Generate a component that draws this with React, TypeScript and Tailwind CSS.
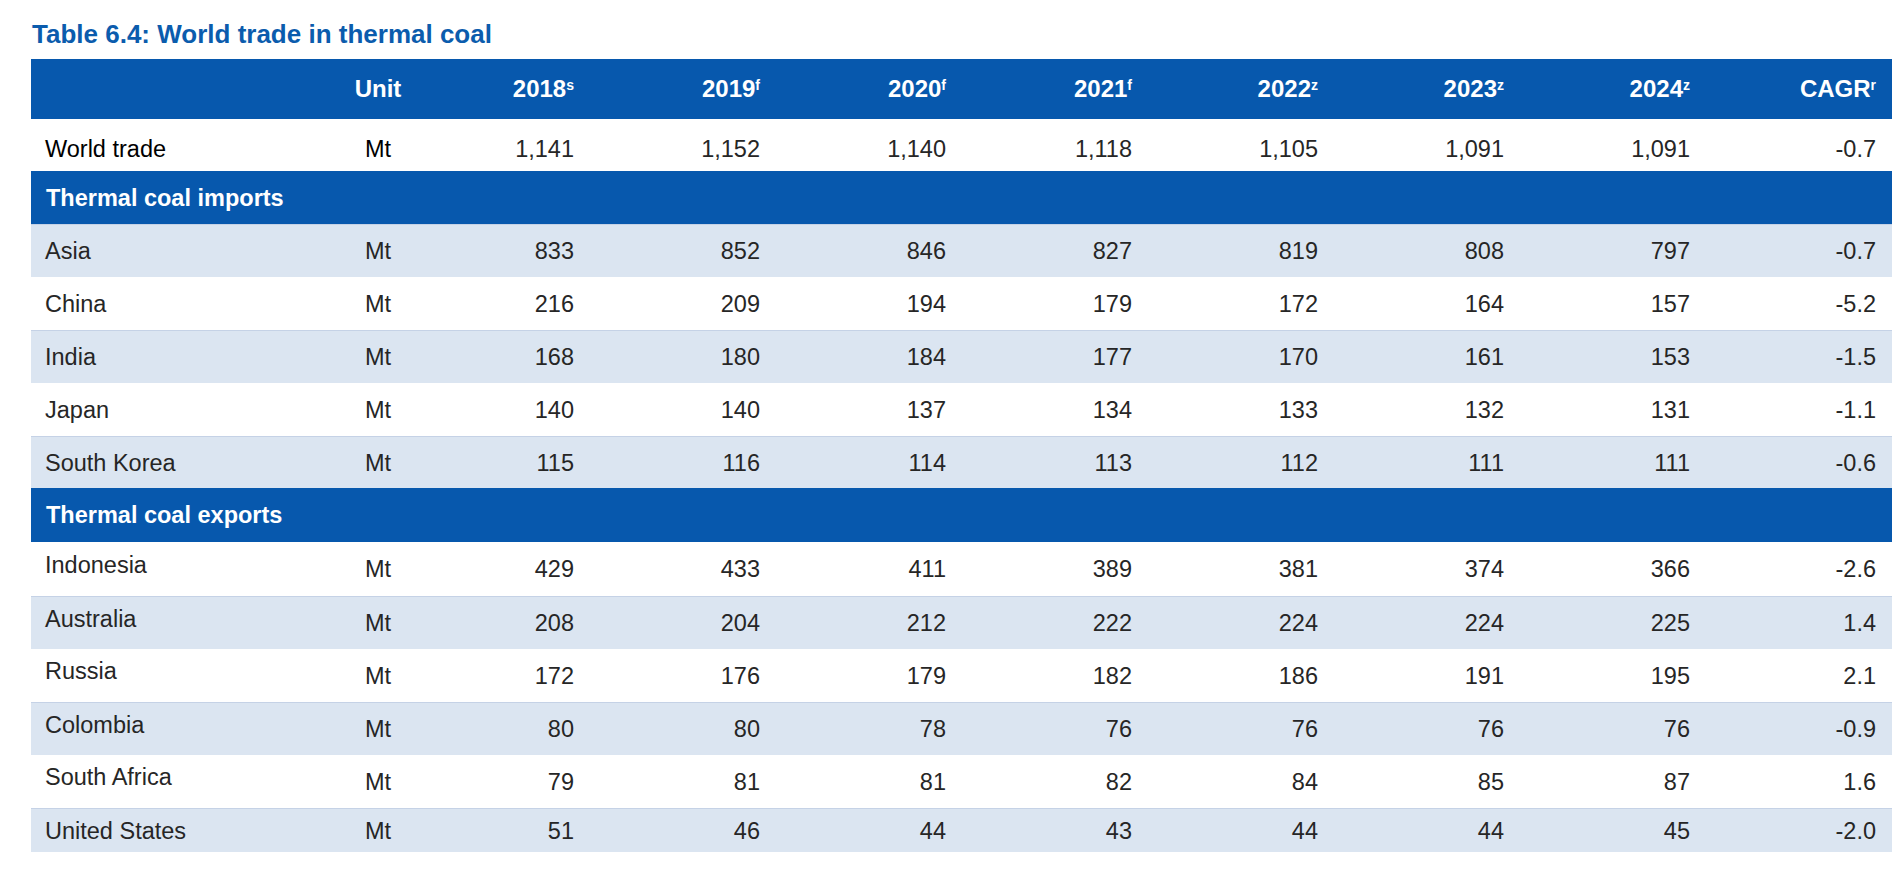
import React from 'react';

type Row = { label: string; values: string[]; shade?: boolean; h: string; lift?: boolean };

const years = [
  { y: '2018', s: 's' },
  { y: '2019', s: 'f' },
  { y: '2020', s: 'f' },
  { y: '2021', s: 'f' },
  { y: '2022', s: 'z' },
  { y: '2023', s: 'z' },
  { y: '2024', s: 'z' },
  { y: 'CAGR', s: 'r' },
];

const imports: Row[] = [
  { label: 'Asia', values: ['833', '852', '846', '827', '819', '808', '797', '-0.7'], shade: true, h: 'h-[53px]' },
  { label: 'China', values: ['216', '209', '194', '179', '172', '164', '157', '-5.2'], h: 'h-[53px]' },
  { label: 'India', values: ['168', '180', '184', '177', '170', '161', '153', '-1.5'], shade: true, h: 'h-[53px]' },
  { label: 'Japan', values: ['140', '140', '137', '134', '133', '132', '131', '-1.1'], h: 'h-[53px]' },
  { label: 'South Korea', values: ['115', '116', '114', '113', '112', '111', '111', '-0.6'], shade: true, h: 'h-[52px]' },
];

const exports: Row[] = [
  { label: 'Indonesia', values: ['429', '433', '411', '389', '381', '374', '366', '-2.6'], h: 'h-[54px]', lift: true },
  { label: 'Australia', values: ['208', '204', '212', '222', '224', '224', '225', '1.4'], shade: true, h: 'h-[53px]', lift: true },
  { label: 'Russia', values: ['172', '176', '179', '182', '186', '191', '195', '2.1'], h: 'h-[53px]', lift: true },
  { label: 'Colombia', values: ['80', '80', '78', '76', '76', '76', '76', '-0.9'], shade: true, h: 'h-[53px]', lift: true },
  { label: 'South Africa', values: ['79', '81', '81', '82', '84', '85', '87', '1.6'], h: 'h-[53px]', lift: true },
  { label: 'United States', values: ['51', '46', '44', '43', '44', '44', '45', '-2.0'], shade: true, h: 'h-[44px]' },
];

const grid = 'grid grid-cols-[321px_52px_repeat(8,186px)] items-center';

const DataRow = ({ row }: { row: Row }) => (
  <div
    className={`${grid} ${row.h} ${row.shade ? 'bg-[#dbe5f1] border-t border-[#c5d2e6]' : 'bg-white'} text-[#262626]`}
  >
    <span className={`pl-[14px] ${row.lift ? 'mb-[9px]' : ''}`}>{row.label}</span>
    <span className="text-center">Mt</span>
    {row.values.map((v, i) => (
      <span key={i} className="text-right pr-[16px]">
        {v}
      </span>
    ))}
  </div>
);

const SectionRow = ({ title, h }: { title: string; h: string }) => (
  <div className={`${h} flex items-center bg-[#0758ad] text-white font-bold pl-[15px]`}>{title}</div>
);

export default function App() {
  return (
    <div className="min-h-screen bg-white pl-[31px] pt-[21px] font-['Liberation_Sans',Arial,sans-serif] text-[23.5px] leading-[24px]">
      <h1 className="text-[26px] leading-[26px] font-bold text-[#0b5cad] pl-[1px] mb-[12px]">
        Table 6.4: World trade in thermal coal
      </h1>

      <div className="w-[1861px]">
        {/* Column headings */}
        <div className={`${grid} h-[60px] bg-[#0758ad] text-white font-bold text-[24px]`}>
          <span />
          <span className="text-center">Unit</span>
          {years.map((c) => (
            <span key={c.y} className="text-right pr-[16px]">
              {c.y}
              <sup className="text-[14px]">{c.s}</sup>
            </span>
          ))}
        </div>

        {/* World total */}
        <div className={`${grid} h-[52px] pt-[7px] bg-white text-black`}>
          <span className="pl-[14px]">World trade</span>
          <span className="text-center">Mt</span>
          {['1,141', '1,152', '1,140', '1,118', '1,105', '1,091', '1,091', '-0.7'].map((v, i) => (
            <span key={i} className="text-right pr-[16px] text-[#262626]">
              {v}
            </span>
          ))}
        </div>

        <SectionRow title="Thermal coal imports" h="h-[53px]" />
        {imports.map((r) => (
          <DataRow key={r.label} row={r} />
        ))}

        <SectionRow title="Thermal coal exports" h="h-[54px]" />
        {exports.map((r) => (
          <DataRow key={r.label} row={r} />
        ))}
      </div>
    </div>
  );
}
